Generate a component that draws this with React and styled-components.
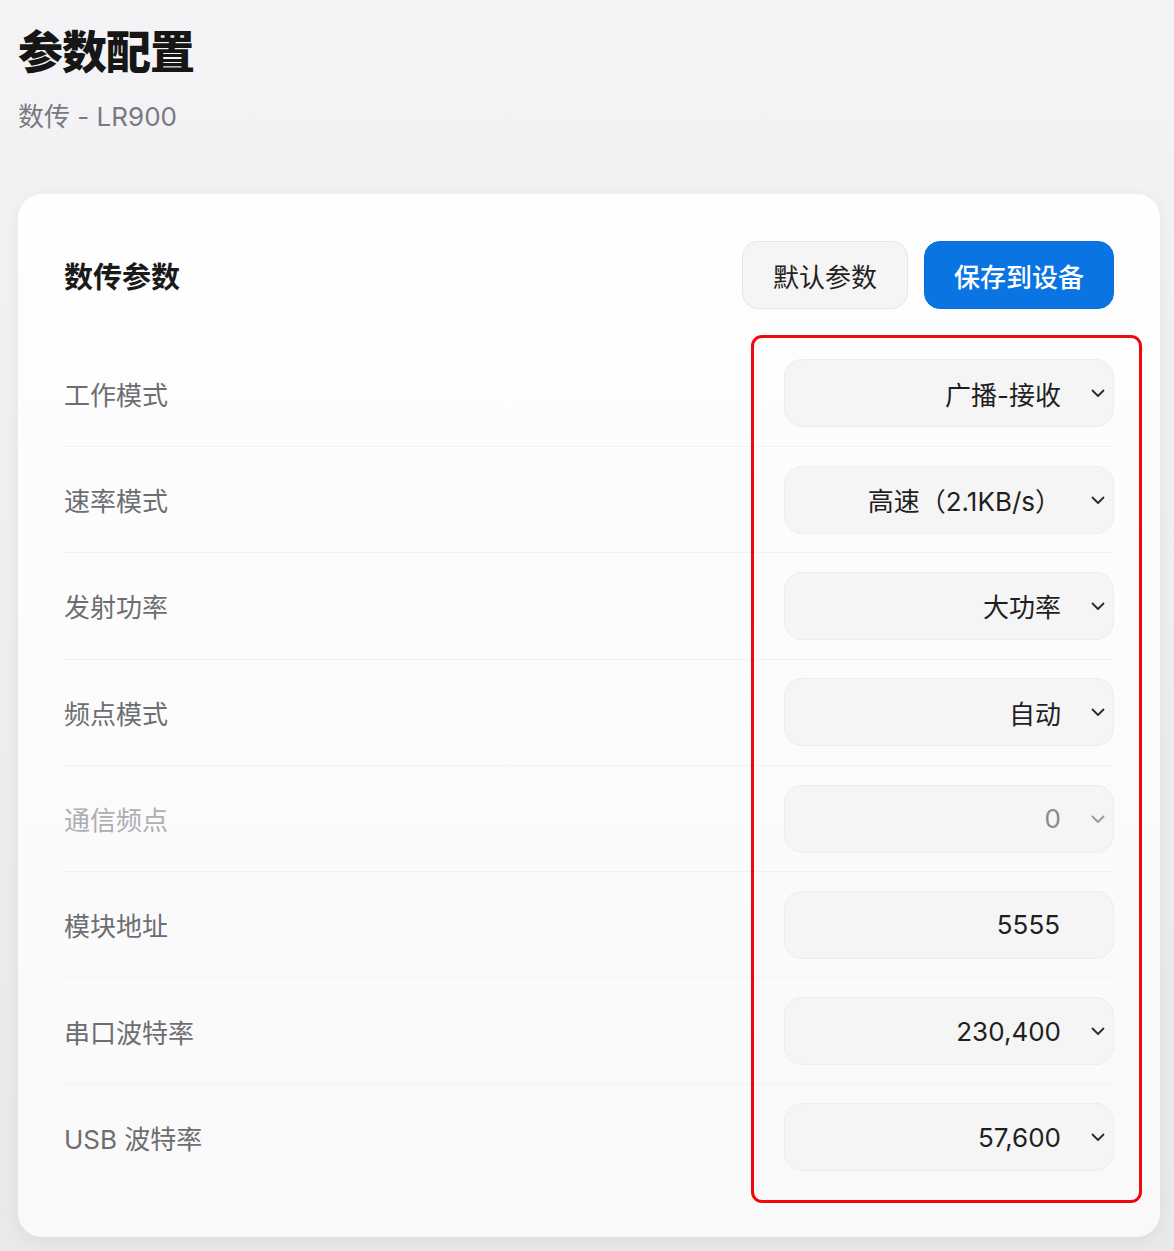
import React from 'react'
import styled, { createGlobalStyle } from 'styled-components'

const GlobalStyle = createGlobalStyle`
  * { box-sizing: border-box; }
  html, body {
    margin: 0;
    padding: 0;
  }
  body {
    font-family: Inter, "Noto Sans CJK SC", "Noto Sans", sans-serif;
    background: linear-gradient(#f4f4f6, #e9e9eb);
    min-height: 1251px;
  }
`

const Page = styled.div`
  padding: 22px 14px 13px 18px;
`
const PageHead = styled.div`
  margin-bottom: 60px;
`
const PageTitle = styled.h1`
  margin: 0;
  font-size: 45px;
  line-height: 62px;
  font-weight: 800;
  color: #161616;
  letter-spacing: -1px;
`
const PageSub = styled.div`
  margin-top: 16px;
  font-size: 26px;
  line-height: 34px;
  color: #7a7a7e;
`
const Card = styled.div`
  background: linear-gradient(#fefefe, #f9f9fa);
  border-radius: 24px;
  padding: 47px 46px 47px 46px;
  box-shadow: 0 4px 18px rgba(0, 0, 0, 0.06);
`
const CardHead = styled.div`
  display: flex;
  align-items: center;
  justify-content: space-between;
  height: 68px;
  margin-bottom: 31px;
`
const CardTitle = styled.h2`
  margin: 0;
  font-size: 29px;
  font-weight: 700;
  color: #1a1a1a;
`
const Actions = styled.div`
  display: flex;
  gap: 16px;
`
const Button = styled.button`
  height: 68px;
  padding: 0 ${p => (p.$primary ? '29px' : '30px')};
  border-radius: 16px;
  font-family: inherit;
  font-size: 26px;
  font-weight: ${p => (p.$primary ? 500 : 400)};
  color: ${p => (p.$primary ? '#fff' : '#222')};
  background: ${p => (p.$primary ? '#0a74e2' : '#f5f5f6')};
  border: 1px solid ${p => (p.$primary ? '#0a6fd8' : '#e6e6e8')};
  cursor: pointer;
`
const Rows = styled.div`
  position: relative;
`
const Row = styled.div`
  display: flex;
  align-items: center;
  justify-content: space-between;
  height: 106px;
  & + & {
    border-top: 1px solid #f2f2f3;
    height: 106.3px;
  }
`
const Label = styled.div`
  font-size: 26px;
  color: ${p => (p.$disabled ? '#aeaeb2' : '#6d6d72')};
`
const Field = styled.div`
  width: 330px;
  height: 68px;
  border-radius: 18px;
  background: #f5f5f6;
  border: 1px solid #ededef;
  display: flex;
  align-items: center;
  justify-content: flex-end;
  padding-right: ${p => (p.$select ? '7px' : '53px')};
  gap: 29px;
`
const Value = styled.span`
  font-size: 26px;
  color: ${p => (p.$disabled ? '#8a8a8e' : '#1f1f1f')};
`
const Chevron = styled.svg`
  width: 16px;
  height: 16px;
  flex: none;
`
const Highlight = styled.div`
  position: absolute;
  top: -5px;
  bottom: -13px;
  right: -28px;
  width: 391px;
  border: 3.5px solid #ee0a0a;
  border-radius: 11px;
  pointer-events: none;
`

const rows = [
  { label: '工作模式', value: '广播-接收', select: true },
  { label: '速率模式', value: '高速（2.1KB/s）', select: true },
  { label: '发射功率', value: '大功率', select: true },
  { label: '频点模式', value: '自动', select: true },
  { label: '通信频点', value: '0', select: true, disabled: true },
  { label: '模块地址', value: '5555' },
  { label: '串口波特率', value: '230,400', select: true },
  { label: 'USB 波特率', value: '57,600', select: true },
]

const ChevronDown = ({ disabled }) => (
  <Chevron viewBox="0 0 16 16">
    <path d="M2.5 5.5 L8 11 L13.5 5.5" fill="none" stroke={disabled ? '#9a9a9e' : '#2a2a2a'} strokeWidth="1.8" strokeLinecap="round" strokeLinejoin="round" />
  </Chevron>
)

const App = () => {
  return (
    <Page>
      <GlobalStyle />
      <PageHead>
        <PageTitle>参数配置</PageTitle>
        <PageSub>数传 - LR900</PageSub>
      </PageHead>
      <Card>
        <CardHead>
          <CardTitle>数传参数</CardTitle>
          <Actions>
            <Button>默认参数</Button>
            <Button $primary>保存到设备</Button>
          </Actions>
        </CardHead>
        <Rows>
          {rows.map(r => (
            <Row key={r.label}>
              <Label $disabled={r.disabled}>{r.label}</Label>
              <Field $select={r.select}>
                <Value $disabled={r.disabled}>{r.value}</Value>
                {r.select && <ChevronDown disabled={r.disabled} />}
              </Field>
            </Row>
          ))}
          <Highlight />
        </Rows>
      </Card>
    </Page>
  )
}

export default App
